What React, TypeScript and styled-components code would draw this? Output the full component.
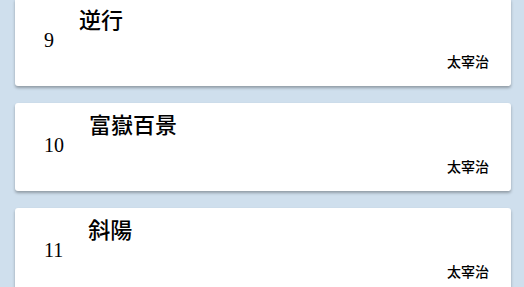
import styled, { createGlobalStyle } from 'styled-components';

const books = [
  { no: 9, title: '逆行', author: '太宰治' },
  { no: 10, title: '富嶽百景', author: '太宰治' },
  { no: 11, title: '斜陽', author: '太宰治' },
];

export default function App() {
  return (
    <>
      <GlobalStyle />
      <List>
        {books.map((b) => (
          <Card key={b.no}>
            <Row>
              <Number>{b.no}</Number>
              <Title>{b.title}</Title>
            </Row>
            <Author>{b.author}</Author>
          </Card>
        ))}
      </List>
    </>
  );
}

const GlobalStyle = createGlobalStyle`
  html, body {
    margin: 0;
    padding: 0;
    background: #cfdfed;
    overflow: hidden;
  }
`;

const List = styled.div`
  display: flex;
  flex-direction: column;
  gap: 17px;
  margin-top: -2px;
  padding: 0 13px 0 15px;
`;

const Card = styled.div`
  background: #ffffff;
  border-radius: 3px;
  box-shadow: 0 2px 3px rgba(0, 0, 0, 0.3);
  padding: 7px 22px 16px 29px;
  display: flex;
  flex-direction: column;
`;

const Row = styled.div`
  display: flex;
  align-items: flex-start;
  gap: 25px;
`;

const Number = styled.span`
  font-family: "Liberation Serif", serif;
  font-size: 20px;
  line-height: 24px;
  padding-top: 23px;
  color: #000;
`;

const Title = styled.h2`
  margin: 0;
  font-family: "Noto Sans CJK JP", serif;
  font-size: 22px;
  line-height: 26px;
  font-weight: 500;
  color: #000;
`;

const Author = styled.div`
  align-self: flex-end;
  margin-top: 0;
  font-family: "Noto Sans CJK JP", sans-serif;
  font-size: 14px;
  line-height: 18px;
  font-weight: 500;
  color: #000;
`;
